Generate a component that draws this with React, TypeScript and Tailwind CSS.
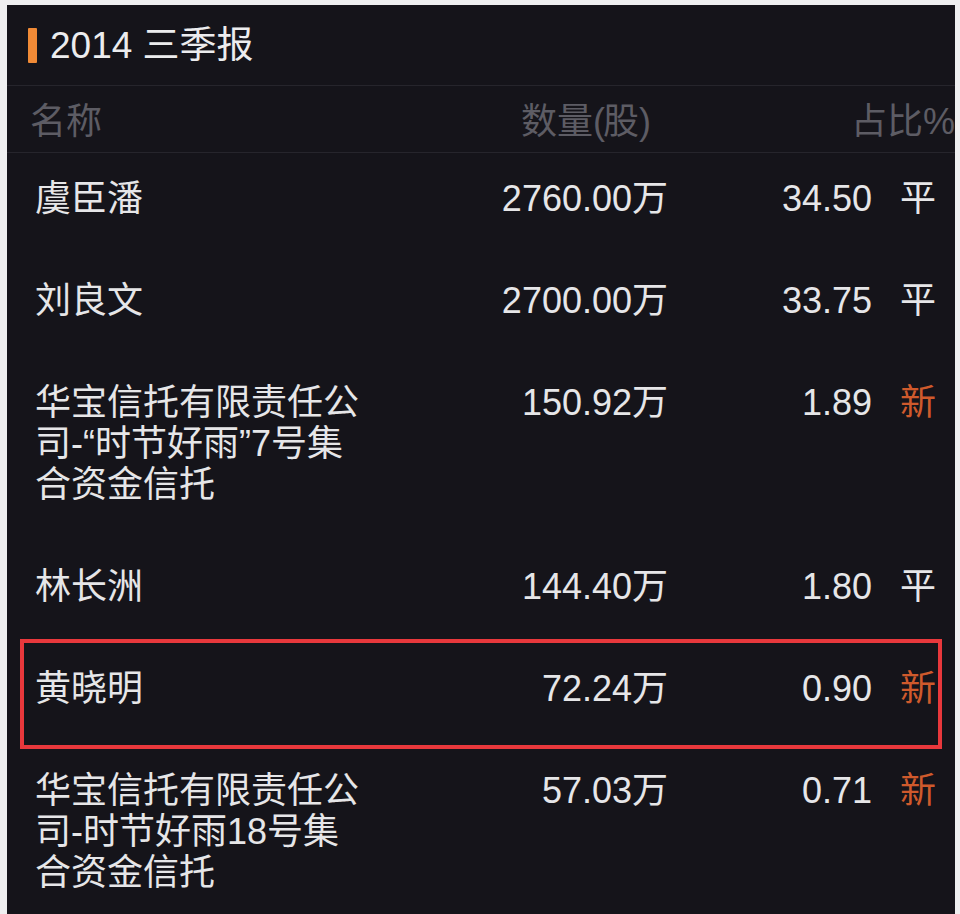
import React from "react";

type Holder = {
    name: string[];
    qty: string;
    pct: string;
    status: "平" | "新";
    marked?: boolean;
};

const holders: Holder[] = [
    { name: ["虞臣潘"], qty: "2760.00万", pct: "34.50", status: "平" },
    { name: ["刘良文"], qty: "2700.00万", pct: "33.75", status: "平" },
    {
        name: ["华宝信托有限责任公", "司-“时节好雨”7号集", "合资金信托"],
        qty: "150.92万",
        pct: "1.89",
        status: "新",
    },
    { name: ["林长洲"], qty: "144.40万", pct: "1.80", status: "平" },
    { name: ["黄晓明"], qty: "72.24万", pct: "0.90", status: "新", marked: true },
    {
        name: ["华宝信托有限责任公", "司-时节好雨18号集", "合资金信托"],
        qty: "57.03万",
        pct: "0.71",
        status: "新",
    },
];

const font = { fontFamily: '"Liberation Sans", "Noto Sans CJK SC", sans-serif' };

const Row = ({ h }: { h: Holder }) => (
    <div className="relative flex items-start pt-[25px] pb-[36px] text-[36px] leading-[41px] text-[#e6e6e8]">
        <div className="w-[336px] pl-[28px] shrink-0">
            {h.name.map((line) => (
                <div key={line} className="whitespace-nowrap">
                    {line}
                </div>
            ))}
        </div>
        <div className="w-[325px] text-right whitespace-nowrap">{h.qty}</div>
        <div className="w-[204px] text-right">{h.pct}</div>
        <div
            className={`ml-[28px] w-[36px] ${h.status === "新" ? "text-[#cf5a2c]" : "text-[#e6e6e8]"}`}
        >
            {h.status}
        </div>
        {h.marked && (
            <div className="absolute left-[13px] top-[-4px] w-[922px] h-[110px] border-4 border-[#e8383c]" />
        )}
    </div>
);

export default function App() {
    return (
        <div className="w-[960px] h-[914px] bg-[#efeff0] pt-[5px] pl-[7px] pr-[5px] overflow-hidden" style={font}>
            <div className="h-full bg-[#15141a] overflow-hidden">
                <div className="h-[81px] flex items-center pl-[21px] border-b border-[#26252c]">
                    <span className="w-[9px] h-[35px] bg-[#f08a36] rounded-[1px]" />
                    <span className="ml-[13px] text-[37px] text-[#ececee] leading-none">2014 三季报</span>
                </div>
                <div className="h-[67px] pt-[6px] flex items-center text-[36px] text-[#5d5c64] border-b border-[#26252c]">
                    <div className="w-[336px] pl-[23px] shrink-0">名称</div>
                    <div className="w-[322px] text-right whitespace-nowrap">
                        数量<span className="tracking-[-2px]">(</span>股)
                    </div>
                    <div className="ml-[200px] whitespace-nowrap">占比%</div>
                </div>
                {holders.map((h, i) => (
                    <Row key={i} h={h} />
                ))}
            </div>
        </div>
    );
}
